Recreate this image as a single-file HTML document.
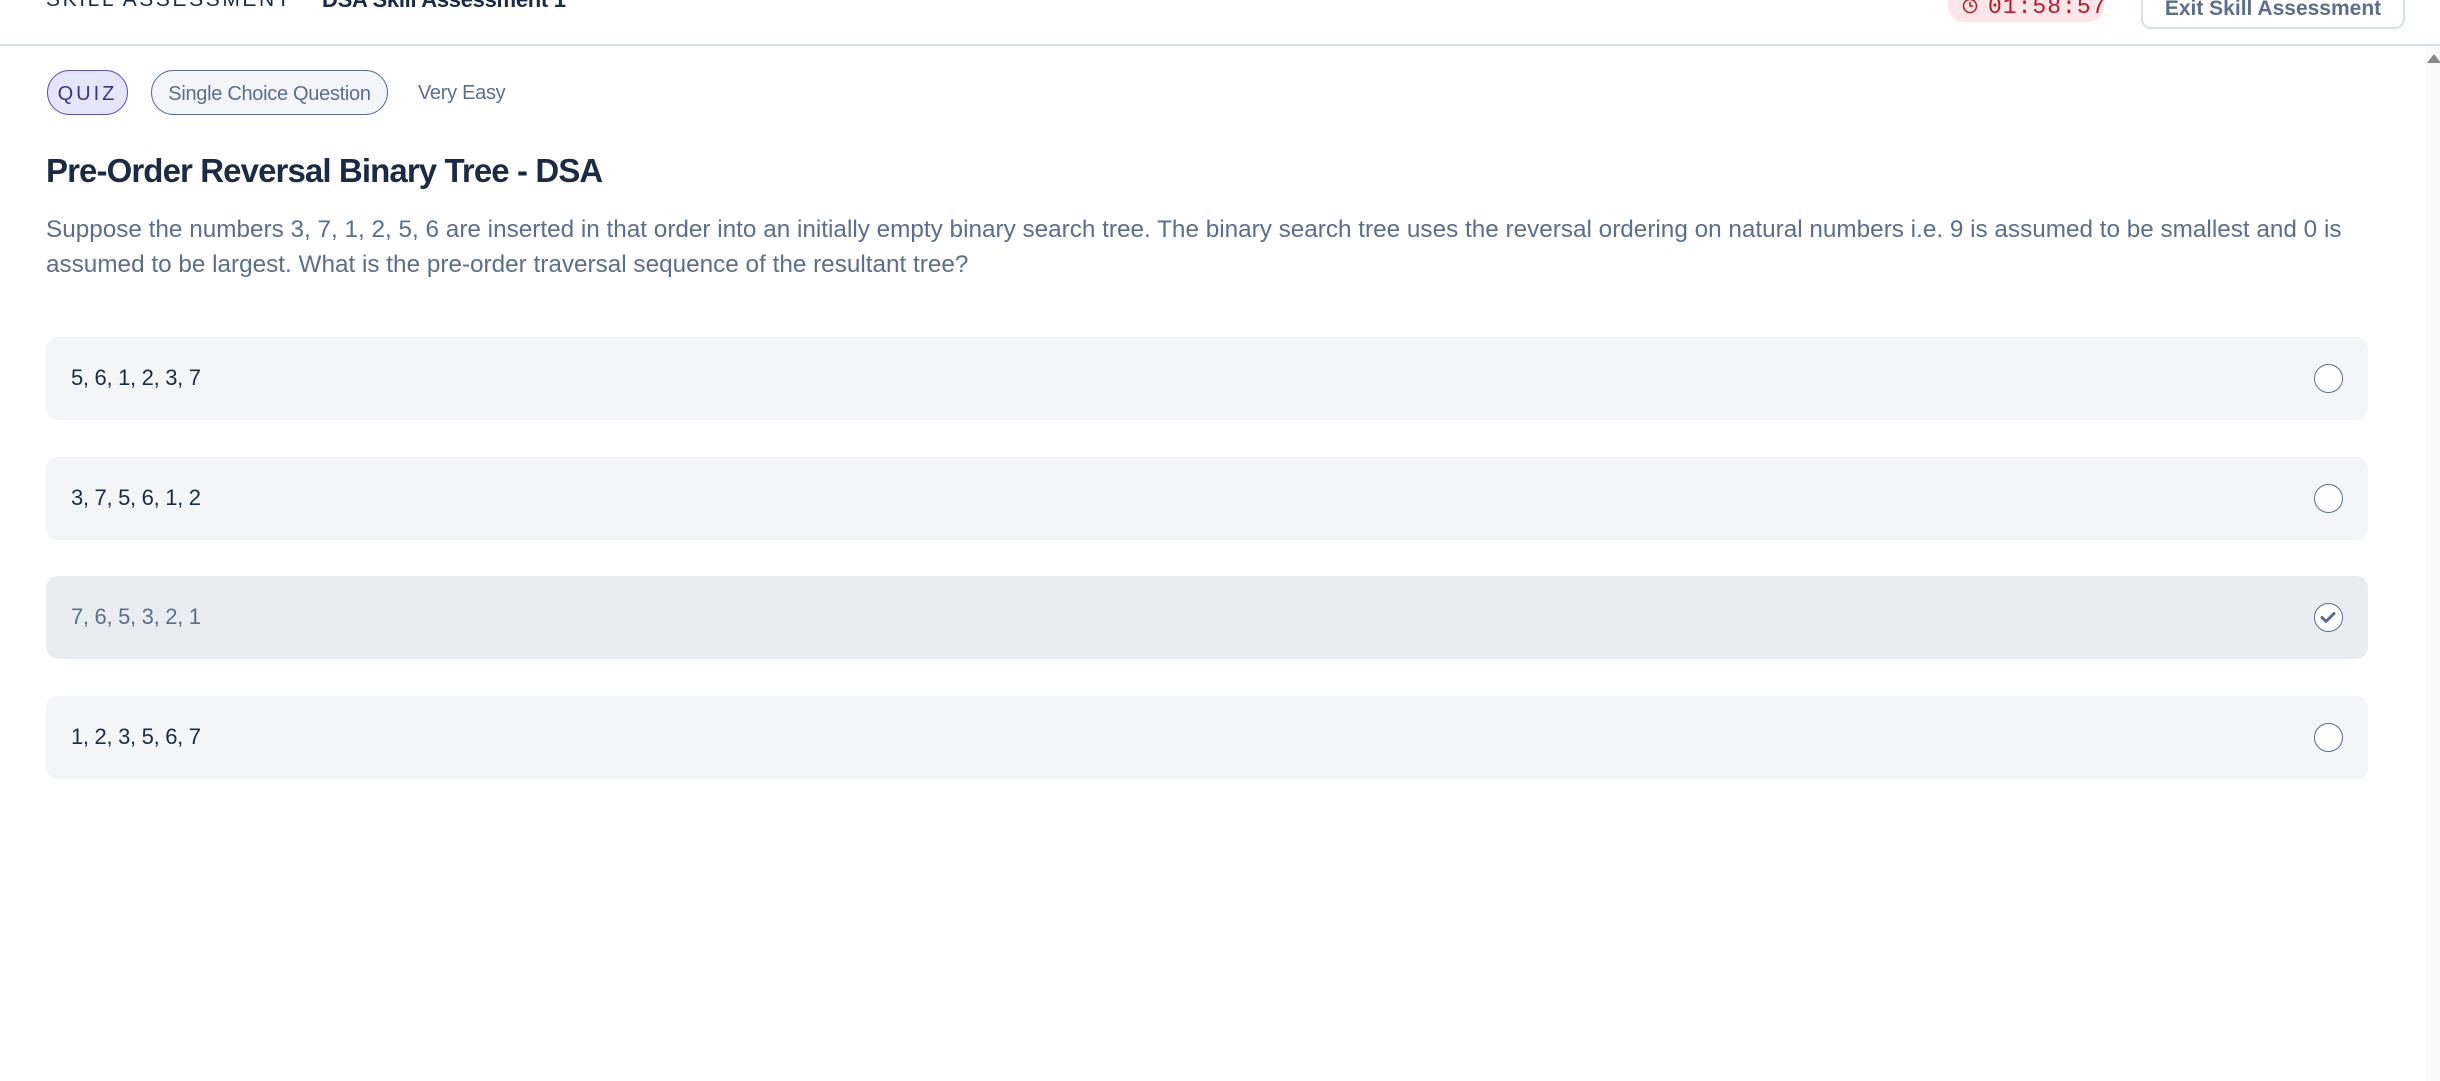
<!DOCTYPE html>
<html><head><meta charset="utf-8"><style>
*{box-sizing:border-box;margin:0;padding:0}
body{width:2440px;height:1081px;background:#fff;position:relative;overflow:hidden;font-family:"Liberation Sans",sans-serif}
.hdr{position:absolute;left:0;top:0;width:2440px;height:46px;border-bottom:2px solid #d9e0e8}
.t1{position:absolute;left:46px;top:-12px;font-size:21px;letter-spacing:2.6px;color:#1a2b45}
.t2{position:absolute;left:322px;top:-13px;font-size:22px;font-weight:bold;color:#1a2b45;letter-spacing:-0.3px}
.timer{position:absolute;left:1948px;top:-20px;width:156px;height:42px;background:#fde6e8;border-radius:16px;color:#c0142a;font-family:"Liberation Mono",monospace;font-size:23px;padding:14px 0 0 40px;letter-spacing:1px}
.timer svg{position:absolute;left:14px;top:18px}
.exit{position:absolute;left:2141px;top:-20px;width:264px;height:49px;border:2px solid #d9e0e8;border-radius:10px;color:#5a6f8c;font-size:21px;font-weight:bold;text-align:center;padding-top:15px}
.sb{position:absolute;left:2425px;top:46px;width:15px;height:1035px;background:#fafafa}
.sb:before{content:"";position:absolute;left:2px;top:8px;border-left:7px solid transparent;border-right:7px solid transparent;border-bottom:9px solid #888}
.pill{position:absolute;top:70px;height:45px;border-radius:23px;font-size:20px;padding-top:12px;text-align:center;white-space:nowrap}
.quiz{left:47px;width:81px;background:#e6e6fb;border:1.5px solid #5a4fc4;color:#3a3390;letter-spacing:3px;font-size:20px}
.scq{left:151px;width:237px;background:#f4f5fa;border:1.5px solid #5a6f8c;color:#5a6f8c;font-size:20px;letter-spacing:-0.3px}
.ve{position:absolute;left:418px;top:82px;font-size:20px;color:#5a6f8c;letter-spacing:-0.3px}
h1{position:absolute;left:46px;top:152px;font-size:33px;color:#1a2b45;letter-spacing:-0.9px;white-space:nowrap}
.desc{position:absolute;left:46px;top:212px;font-size:24.3px;line-height:35px;color:#5a6f8c;white-space:nowrap}
.opt{position:absolute;left:46px;width:2322px;height:83px;background:#f4f5f9;border-radius:12px}
.opt span{position:absolute;left:25px;top:28px;font-size:22px;color:#1a2b45;letter-spacing:-0.3px}
.opt i{position:absolute;left:2268px;top:27px;width:29px;height:29px;border:1.5px solid #5a6f8c;border-radius:50%;background:#fff}
.sel{background:#e9edf2}.sel span{color:#5a6f8c}
</style></head><body>
<div class="hdr">
<div class="t1">SKILL ASSESSMENT</div>
<div class="t2">DSA Skill Assessment 1</div>
<div class="timer"><svg width="16" height="16" viewBox="0 0 16 16"><circle cx="8" cy="8" r="6.5" fill="none" stroke="#c0142a" stroke-width="1.5"/><path d="M8 4v4h3" fill="none" stroke="#c0142a" stroke-width="1.5"/></svg>01:58:57</div>
<div class="exit">Exit Skill Assessment</div>
</div>
<div class="sb"></div>
<div class="pill quiz">QUIZ</div>
<div class="pill scq">Single Choice Question</div>
<div class="ve">Very Easy</div>
<h1>Pre-Order Reversal Binary Tree - DSA</h1>
<div class="desc">Suppose the numbers 3, 7, 1, 2, 5, 6 are inserted in that order into an initially empty binary search tree. The binary search tree uses the reversal ordering on natural numbers i.e. 9 is assumed to be smallest and 0 is<br>assumed to be largest. What is the pre-order traversal sequence of the resultant tree?</div>
<div class="opt" style="top:337px"><span>5, 6, 1, 2, 3, 7</span><i></i></div>
<div class="opt" style="top:457px"><span>3, 7, 5, 6, 1, 2</span><i></i></div>
<div class="opt sel" style="top:576px"><span>7, 6, 5, 3, 2, 1</span><i><svg width="26" height="26" viewBox="0 0 26 26" style="position:absolute;left:0;top:0"><path d="M7 13.5l4 4 8-8" fill="none" stroke="#5a6f8c" stroke-width="3" stroke-linecap="round" stroke-linejoin="round"/></svg></i></div>
<div class="opt" style="top:696px"><span>1, 2, 3, 5, 6, 7</span><i></i></div>
</body></html>
